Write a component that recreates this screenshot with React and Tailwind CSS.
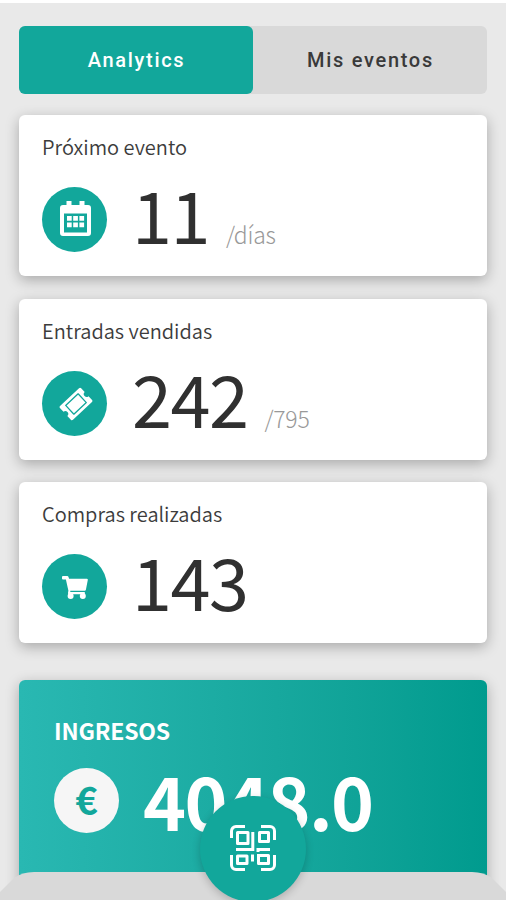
const CalendarIcon = () => (
  <svg width="31" height="35" viewBox="0 0 31 35" fill="#fff" className="-mt-0.5 ml-[2px]">
    <path
      fillRule="evenodd"
      d="M6.500 0h5v4h8V0h5v4H28a3 3 0 0 1 3 3v25a3 3 0 0 1-3 3H3a3 3 0 0 1-3-3V7a3 3 0 0 1 3-3h3.500zM4 12.500V31.500h23V12.500z"
    />
    <path d="M7 15h4.700v4.700H7zM13.200 15h4.700v4.700h-4.700zM19.400 15h4.700v4.700h-4.700zM7 21.500h4.700v4.700H7zM13.200 21.500h4.700v4.700h-4.700zM19.400 21.500h4.700v4.700h-4.700z" />
  </svg>
);

const TicketIcon = () => (
  <svg width="36" height="36" viewBox="0 0 36 36" className="ml-[2px] mt-px">
    <g transform="rotate(-43 18 18)">
      <path
        d="M5 8.500h26a1.500 1.500 0 0 1 1.500 1.500v5.200a2.800 2.800 0 0 0 0 5.600V26a1.500 1.500 0 0 1-1.500 1.500H5A1.500 1.500 0 0 1 3.500 26v-5.200a2.800 2.800 0 0 0 0-5.600V10A1.500 1.500 0 0 1 5 8.500z"
        fill="#fff"
      />
      <path d="M9.500 12h17v12h-17z" fill="none" stroke="#12a79b" strokeWidth="1.300" strokeLinejoin="round" />
    </g>
  </svg>
);

const CartIcon = () => (
  <svg width="26" height="24" viewBox="0 0 26 24" fill="#fff" className="mt-0.5">
    <path d="M1 0h4.300a1.200 1.200 0 0 1 1.100.8l.7 2h17.700a1 1 0 0 1 1 1.200l-1.900 9.700a1.200 1.200 0 0 1-1.200 1H8.300v1.300h14.500v2.200H7.200A1.200 1.200 0 0 1 6 16.800l.4-2L3.900 3.400H1a1 1 0 0 1-1-1V1a1 1 0 0 1 1-1z" />
    <circle cx="8.600" cy="20" r="3" />
    <circle cx="20.800" cy="20" r="3" />
  </svg>
);

const QrIcon = () => (
  <svg width="46" height="46" viewBox="0 0 46 46" fill="none" stroke="#fff" strokeWidth="3" className="-mt-[3px]">
    <path d="M1.500 13V6a4.500 4.500 0 0 1 4.500-4.500h9M31 1.500h9A4.500 4.500 0 0 1 44.500 6v9M1.500 30v10a4.500 4.500 0 0 0 4.500 4.500h9M31 44.500h9a4.500 4.500 0 0 0 4.500-4.500V30" />
    <path d="M7.500 7.500h10.500v11H7.500zM29.500 7.500h9v9h-9zM7.500 31h9.500v7.500H7.500zM28.500 32V38.500h10v-8H27" strokeLinejoin="round" />
    <path d="M22.800 7v17.500H6M22.500 29.500v7M28 27v-2.500H40" />
  </svg>
);

const StatCard = ({ title, icon, value, suffix }) => (
  <div className="h-[161px] rounded-md bg-white px-[23px] pt-5 shadow-[0_4px_14px_rgba(0,0,0,0.28)]">
    <h2 className="h-6 text-xl font-[350] leading-6 text-[#3c3c3c]">{title}</h2>
    <div className="mt-7 flex h-[65px]">
      <div className="flex size-[65px] items-center justify-center rounded-full bg-[#12a79b]">{icon}</div>
      <span className="ml-[25px] text-[72px] leading-[52px] tracking-[-1.500px] text-[#303030]">{value}</span>
      {suffix && <span className="ml-[17px] mt-[33px] text-[23px] font-light leading-7 tracking-[-0.200px] text-[#999]">{suffix}</span>}
    </div>
  </div>
);

export default function App() {
  return (
    <div className="relative h-[900px] w-[506px] overflow-hidden border-t-[3px] border-white bg-[#e9e9e9] px-[19px] pt-[23px] font-['Noto_Sans_CJK_SC',sans-serif]">
      <div className="flex h-[68px] w-[468px] rounded-md bg-[#d9d9d9] font-['Roboto',sans-serif] text-xl font-medium tracking-[1.700px]">
        <button className="w-[234px] rounded-md bg-[#12a79b] pl-px text-white">Analytics</button>
        <button className="w-[234px] pl-px text-[#3a3a3a]">Mis eventos</button>
      </div>

      <div className="mt-[21px] flex w-[468px] flex-col gap-[22.500px]">
        <StatCard title="Próximo evento" icon={<CalendarIcon />} value="11" suffix="/días" />
        <StatCard title="Entradas vendidas" icon={<TicketIcon />} value="242" suffix="/795" />
        <StatCard title="Compras realizadas" icon={<CartIcon />} value="143" />
      </div>

      <div className="mt-[37px] h-[220px] w-[468px] rounded-md bg-linear-to-r from-[#29b8b2] to-[#009b8e] px-[35px] pt-[38px] text-white shadow-[0_4px_14px_rgba(0,0,0,0.28)]">
        <h2 className="h-6 text-[23px] font-bold leading-6 tracking-[-0.200px]">INGRESOS</h2>
        <div className="mt-[26px] flex">
          <div className="flex size-[65px] items-center justify-center rounded-full bg-[#f6f6f6] pb-1 text-[38px] font-bold leading-none text-[#12a79b]">
            €
          </div>
          <span className="ml-6 text-[73px] font-bold leading-[62px] tracking-[-1.600px]">4048.0</span>
        </div>
      </div>

      {/* Bottom bar with the scan button on top */}
      <div className="absolute inset-x-0 bottom-0 h-[28px] bg-[#d9d9d9] [clip-path:path('M0_28V20L14_6Q22_0_34_0H472Q484_0_492_6L506_20V28Z')]" />
      <button className="absolute bottom-[-2px] left-[200px] flex size-[106px] items-center justify-center rounded-full bg-[#12a79b] shadow-[0_3px_9px_rgba(0,0,0,0.2)]">
        <QrIcon />
      </button>
    </div>
  );
}
